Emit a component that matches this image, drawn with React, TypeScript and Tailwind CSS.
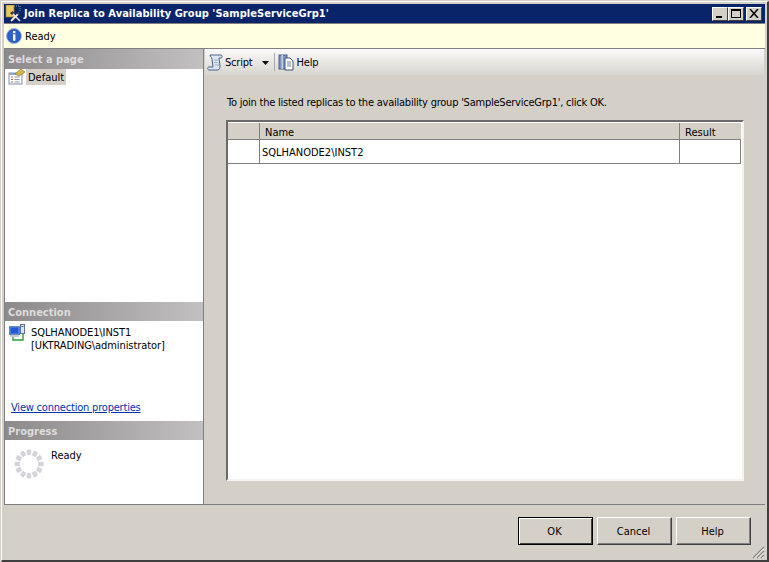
function SectionHeader({ label, first = false }: { label: string; first?: boolean }) {
  return (
    <div className={`${first ? "h-[20px]" : "h-[19px]"} shrink-0 flex items-center pl-[3px] pt-[1px] bg-gradient-to-r from-[#8c8a8a] to-[#c2c0c0] text-[#dedcdc] text-[11px] font-bold leading-none`}>
      {label}
    </div>
  );
}

function TitleIcon() {
  return (
    <svg width="17" height="17" viewBox="0 0 17 17" className="shrink-0">
      <rect x="1" y="0" width="8" height="12" fill="#e8c860" stroke="#a08030" strokeWidth="0.7" />
      <path d="M9 1h6M15 1v6" stroke="#70a8a0" strokeWidth="1" strokeDasharray="1 1" fill="none" />
      <path d="M6 16 14 8" stroke="#f4f0e8" strokeWidth="1.8" />
      <path d="M15 16 7 8" stroke="#e8e8e8" strokeWidth="1.6" />
      <path d="M5 8l3-2 1 2-2 2z" fill="#30384a" />
      <path d="M12 7l3 1-1 2-2-1z" fill="#30384a" />
    </svg>
  );
}

function InfoIcon() {
  return (
    <svg width="16" height="16" viewBox="0 0 16 16" className="shrink-0">
      <circle cx="8" cy="8" r="7.5" fill="#2a5cc0" stroke="#a9b6d0" />
      <circle cx="8" cy="8" r="5.5" fill="#2f62c8" />
      <rect x="7" y="3" width="2.4" height="2.2" fill="#fff" />
      <rect x="7" y="6.3" width="2.4" height="6.4" fill="#fff" />
    </svg>
  );
}

function ScriptIcon() {
  return (
    <svg width="17" height="17" viewBox="0 0 17 17" className="shrink-0">
      <path d="M3 1h11c1.5 0 1.5 3 0 3h-2l1 8c.3 2-1 4-2 4H2c-1.5 0-2-3 0-3h4L5 5C4.800 3 3 3 3 1z" fill="#dfe6f3" stroke="#47638f" strokeWidth="1" />
      <path d="M7 6h4M7 8.500h4M8 11h4" stroke="#8ea4c6" strokeWidth="0.9" />
    </svg>
  );
}

function HelpDocIcon() {
  return (
    <svg width="17" height="17" viewBox="0 0 17 17" className="shrink-0">
      <rect x="1" y="1" width="8" height="14" fill="#7f93bd" stroke="#4a5f8f" />
      <rect x="3.500" y="1" width="1.500" height="14" fill="#c3cde3" />
      <path d="M7 4h5l3 3v9H7z" fill="#fff" stroke="#3c4f7c" />
      <path d="M9 8h4M9 10h4M9 12h4" stroke="#6f7f9f" strokeWidth="1" />
    </svg>
  );
}

function PageIcon() {
  return (
    <svg width="17" height="16" viewBox="0 0 17 16" className="shrink-0">
      <rect x="1" y="4" width="13" height="11" fill="#fff" stroke="#7f8fa8" />
      <rect x="1" y="4" width="13" height="2" fill="#8ba6d0" />
      <path d="M3 8h2M3 10.500h2M3 13h2" stroke="#c86030" strokeWidth="1" />
      <path d="M6.500 8h5M6.500 10.500h5M6.500 13h5" stroke="#8a98b0" strokeWidth="1" />
      <path d="M7 5 13 0l4 3-6 4z" fill="#d8b840" stroke="#7a6a20" strokeWidth="0.6" />
    </svg>
  );
}

function ConnectionIcon() {
  return (
    <svg width="17" height="17" viewBox="0 0 17 17" className="shrink-0">
      <rect x="0.500" y="2.500" width="10" height="8" fill="#3f78e0" stroke="#7088a8" />
      <rect x="2" y="4" width="7" height="5" fill="#2458d8" />
      <rect x="1" y="11" width="9" height="2" fill="#c8ccd4" />
      <rect x="11.500" y="0.500" width="4" height="9" fill="#dfe3ea" stroke="#5a6f98" />
      <rect x="12.500" y="2" width="2" height="1" fill="#3060b0" />
      <path d="M4 13v3h10v-6" stroke="#2f9a3a" strokeWidth="1.400" fill="none" />
    </svg>
  );
}

function Spinner() {
  const dots = Array.from({ length: 12 }, (_, i) => (i * 360) / 12);
  return (
    <svg width="30" height="30" viewBox="0 0 32 32" className="shrink-0">
      {dots.map((a) => (
        <rect key={a} x="13.600" y="0.500" width="4.800" height="6" rx="1.200" fill="#d6d4da" transform={`rotate(${a} 16 16)`} />
      ))}
    </svg>
  );
}

function WinButton({ label, isDefault = false }: { label: string; isDefault?: boolean }) {
  return (
    <div
      className={`w-[75px] h-[28px] flex items-center justify-center pt-[2px] pr-[2px] text-[11px] text-black bg-[#d4d0c8] ${
        isDefault
          ? "border border-black shadow-[inset_1px_1px_0_#fff,inset_-1px_-1px_0_#404040]"
          : "border-t border-l border-t-white border-l-white border-r border-b border-r-[#404040] border-b-[#404040] shadow-[inset_-1px_-1px_0_#808080]"
      }`}
    >
      {label}
    </div>
  );
}

function CaptionButton({ children }: { children: React.ReactNode }) {
  return (
    <div className="w-[16px] h-[14px] bg-[#d4d0c8] border-t border-l border-white border-r border-b border-r-[#404040] border-b-[#404040] flex items-center justify-center">
      {children}
    </div>
  );
}

export default function App() {
  return (
    <div className="w-[769px] h-[562px] bg-[#d4d0c8] font-['DejaVu_Sans_Condensed','DejaVu_Sans',sans-serif] text-black overflow-hidden relative border-l border-t border-l-[#d4d0c8] border-t-[#d4d0c8]">
      <div className="h-full border-b-2 border-r-2 border-b-[#404040] border-r-[#404040] border-l border-l-white border-t border-t-white pt-[2px] pl-[2px] pr-[2px] flex flex-col">
        {/* title bar */}
        <div className="h-[19px] bg-[#0a246a] flex items-center pl-[1px] pr-[3px] gap-[2px] shrink-0">
          <TitleIcon />
          <span className="text-white text-[11px] font-bold tracking-[0.05px] leading-none flex-1">
            Join Replica to Availability Group 'SampleServiceGrp1'
          </span>
          <div className="flex gap-0">
            <CaptionButton>
              <div className="w-[6px] h-[2px] bg-black mt-[7px] mr-[2px]" />
            </CaptionButton>
            <CaptionButton>
              <div className="w-[10px] h-[9px] border border-black border-t-2" />
            </CaptionButton>
            <div className="w-[2px]" />
            <CaptionButton>
              <svg width="10" height="9" viewBox="0 0 10 9">
                <path d="M1 0l8 9M9 0 1 9" stroke="#000" strokeWidth="1.500" />
              </svg>
            </CaptionButton>
          </div>
        </div>

        {/* info bar */}
        <div className="h-[26px] bg-[#ffffe1] border-y border-y-[#808080] flex items-center pl-[2px] gap-[3px] shrink-0">
          <InfoIcon />
          <span className="text-[11px] leading-none">Ready</span>
        </div>

        <div className="h-[456px] flex shrink-0 border-b border-b-[#808080]">
          {/* left panel */}
          <div className="w-[200px] bg-white border-l border-r border-[#808080] flex flex-col shrink-0">
            <SectionHeader label="Select a page" first />
            <div className="h-[16px] flex items-center pl-[3px] gap-[1px] shrink-0">
              <PageIcon />
              <span className="bg-[#d4d0c8] h-[16px] flex items-center px-[2px] text-[11px] leading-none">Default</span>
            </div>
            <div className="h-[217px] shrink-0" />
            <SectionHeader label="Connection" />
            <div className="h-[100px] relative flex flex-col shrink-0">
              <div className="flex pl-[4px] pt-[3px] gap-[5px]">
                <ConnectionIcon />
                <div className="text-[11px] tracking-[-0.08px] leading-[13px] pt-[2px]">
                  <div>SQLHANODE1\INST1</div>
                  <div>[UKTRADING\administrator]</div>
                </div>
              </div>
              <div className="mt-auto pb-[7px] pl-[6px] text-[11px] tracking-[-0.2px] leading-[13px] text-[#0033aa] underline">
                View connection properties
              </div>
            </div>
            <SectionHeader label="Progress" />
            <div className="flex pl-[9px] pt-[9px] gap-[7px]">
              <Spinner />
              <span className="text-[11px] leading-none mt-[1px]">Ready</span>
            </div>
          </div>

          {/* right panel */}
          <div className="flex-1 flex flex-col min-w-0">
            <div className="h-[26px] ml-[1px] mr-[1px] bg-gradient-to-b from-[#fbfafa] to-[#d8d5cf] flex items-center pl-[2px] shrink-0">
              <ScriptIcon />
              <span className="text-[11px] tracking-[-0.2px] ml-[1px] pt-[2px]">Script</span>
              <svg width="7" height="4" viewBox="0 0 7 4" className="ml-[9px] mt-[1px] shrink-0">
                <path d="M0 0h7L3.500 4z" fill="#000" />
              </svg>
              <div className="w-px h-[18px] bg-[#a8a8a8] ml-[5px] mr-[3px]" />
              <HelpDocIcon />
              <span className="text-[11px] tracking-[-0.2px] ml-[2px] pt-[2px]">Help</span>
            </div>
            <div className="flex-1 flex flex-col pl-[22px] pr-[21px] pt-[21px] pb-[23px]">
              <p className="text-[11px] tracking-[-0.23px] leading-[13px] h-[24px] shrink-0 pl-[1px]">
                To join the listed replicas to the availability group 'SampleServiceGrp1', click OK.
              </p>
              <div className="flex-1 bg-white border-t-2 border-l-2 border-t-[#6a6a6a] border-l-[#6a6a6a] border-b-2 border-r-2 border-b-[#f4f2ee] border-r-[#f4f2ee]">
                <div className="flex h-[17px] bg-[#d4d0c8] border-b border-b-[#808080] text-[11px] leading-none mt-[1px] mr-[1px]">
                  <div className="w-[32px] border-r border-r-[#808080]" />
                  <div className="w-[420px] border-r border-r-[#808080] pl-[5px] pt-[2px] flex items-center">Name</div>
                  <div className="flex-1 pl-[5px] pt-[2px] flex items-center">Result</div>
                </div>
                <div className="flex h-[24px] border-b border-b-[#808080] text-[11px] leading-none mr-[1px]">
                  <div className="w-[32px] border-r border-r-[#808080]" />
                  <div className="w-[420px] border-r border-r-[#808080] pl-[2px] pt-[2px] flex items-center">SQLHANODE2\INST2</div>
                  <div className="flex-1 border-r border-r-[#808080]" />
                </div>
              </div>
            </div>
          </div>
        </div>

        {/* footer */}
        <div className="flex-1 flex items-start justify-end pt-[12px] pr-[14px] gap-[4px] relative">
          <WinButton label="OK" isDefault />
          <WinButton label="Cancel" />
          <WinButton label="Help" />
          <svg width="13" height="13" viewBox="0 0 13 13" className="absolute right-[0px] bottom-[1px]">
            <path d="M1 12 12 1M5 12l7-7M9 12l3-3" stroke="#808080" strokeWidth="1.200" />
            <path d="M2.500 12 12 2.500M6.500 12 12 6.500M10.500 12l1.500-1.500" stroke="#fff" strokeWidth="0.800" />
          </svg>
        </div>
      </div>
    </div>
  );
}
